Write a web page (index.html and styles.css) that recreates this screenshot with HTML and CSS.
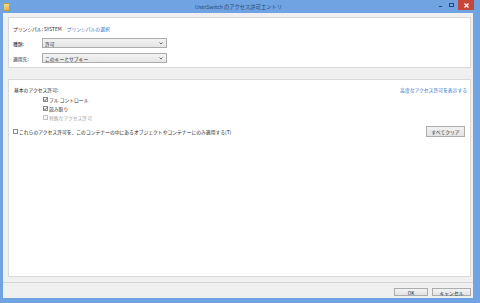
FILE: index.html
```html
<!DOCTYPE html>
<html lang="ja">
<head>
    <meta charset="UTF-8">
    <title>UserSwitch のアクセス許可エントリ</title>
    <link rel="stylesheet" href="styles.css">
</head>
<body>

    <div class="window">
        <!-- Title Bar -->
        <div class="titlebar">
            <div class="app-icon"></div>
            <div class="title">UserSwitch のアクセス許可エントリ</div>
            <div class="controls">
                <span class="ctl-min"></span>
                <span class="ctl-max"></span>
                <span class="ctl-close">
                    <svg width="5" height="5" viewBox="0 0 10 10"><path d="M1 1 L9 9 M9 1 L1 9" stroke="#fff" stroke-width="2.4" fill="none"/></svg>
                </span>
            </div>
        </div>

        <div class="client">
            <div class="content">
                <!-- Principal / Type / Applies to -->
                <div class="panel top-panel">
                    <div class="principal">プリンシパル: SYSTEM <a class="link" href="#">プリンシパルの選択</a></div>
                    <div class="field">
                        <span class="label">種類:</span>
                        <div class="combo">
                            <span>許可</span>
                            <svg width="4" height="3" viewBox="0 0 8 6"><path d="M1 1 L4 4 L7 1" stroke="#444" stroke-width="1.6" fill="none"/></svg>
                        </div>
                    </div>
                    <div class="field">
                        <span class="label">適用先:</span>
                        <div class="combo">
                            <span>このキーとサブキー</span>
                            <svg width="4" height="3" viewBox="0 0 8 6"><path d="M1 1 L4 4 L7 1" stroke="#444" stroke-width="1.6" fill="none"/></svg>
                        </div>
                    </div>
                </div>

                <!-- Basic Permissions -->
                <div class="panel perm-panel">
                    <div class="perm-head">
                        <span>基本のアクセス許可:</span>
                        <a class="link" href="#">高度なアクセス許可を表示する</a>
                    </div>
                    <div class="checklist">
                        <div class="check-row">
                            <span class="box"><svg width="5" height="5" viewBox="0 0 10 10"><path d="M2 5 L4.2 7.4 L8.2 2.6" stroke="#333" stroke-width="1.5" fill="none"/></svg></span>フル コントロール
                        </div>
                        <div class="check-row">
                            <span class="box"><svg width="5" height="5" viewBox="0 0 10 10"><path d="M2 5 L4.2 7.4 L8.2 2.6" stroke="#333" stroke-width="1.5" fill="none"/></svg></span>読み取り
                        </div>
                        <div class="check-row disabled">
                            <span class="box"></span>特殊なアクセス許可
                        </div>
                    </div>
                    <div class="apply-row">
                        <div class="check-row">
                            <span class="box"></span>これらのアクセス許可を、このコンテナーの中にあるオブジェクトやコンテナーにのみ適用する(T)
                        </div>
                        <button class="btn btn-clear">すべてクリア</button>
                    </div>
                </div>
            </div>

            <!-- Dialog Buttons -->
            <div class="footer">
                <button class="btn btn-ok">OK</button>
                <button class="btn btn-cancel">キャンセル</button>
            </div>
        </div>
    </div>

</body>
</html>
```

FILE: styles.css
```css
body {
    margin: 0;
    font-family: "Noto Sans CJK JP", "Noto Sans", sans-serif;
    font-size: 4.8px;
    color: #1a1a1a;
}

.window {
    width: 480px;
    height: 303px;
    background-color: #6fa3e2;
    display: flex;
    flex-direction: column;
    box-sizing: border-box;
    padding-bottom: 5px;
}

/* Title bar */
.titlebar {
    height: 13px;
    display: grid;
    grid-template-columns: 1fr auto 1fr;
    align-items: center;
    padding: 0 6px 0 3px;
}

.app-icon {
    width: 5px;
    height: 6px;
    background: linear-gradient(#f6dc8a, #e2b64c);
    border: 0.5px solid #c79a35;
}

.title {
    font-size: 5.3px;
    color: #2c4a6e;
}

.controls {
    display: flex;
    justify-content: flex-end;
    align-items: flex-start;
    align-self: start;
    height: 13px;
}

.ctl-min {
    width: 3px;
    height: 1px;
    background: #2c4a6e;
    margin: 6px 7px 0 0;
}

.ctl-max {
    width: 3px;
    height: 2px;
    border: 1px solid #2c4a6e;
    border-top-width: 1.5px;
    margin: 3px 4px 0 0;
}

.ctl-close {
    width: 16px;
    height: 10px;
    background-color: #c7463a;
    display: flex;
    align-items: center;
    justify-content: center;
}

/* Client area */
.client {
    flex: 1;
    margin: 0 7px 0 3px;
    background-color: #f0f0f0;
    display: flex;
    flex-direction: column;
}

.content {
    padding: 4px 2px 0 5px;
}

.panel {
    background: white;
    border: 1px solid #d9d9d9;
    box-sizing: border-box;
}

.link {
    color: #2a6fc9;
    text-decoration: none;
}

.top-panel {
    height: 51px;
    padding: 8px 5px 0 4px;
}

.principal {
    height: 6px;
    line-height: 6px;
    margin-bottom: 6px;
}

.principal .link {
    margin-left: 4px;
}

.field {
    display: flex;
    align-items: center;
    height: 10px;
    margin-bottom: 5px;
}

.label {
    width: 29px;
}

.combo {
    width: 125px;
    height: 10px;
    box-sizing: border-box;
    border: 1px solid #acacac;
    background: linear-gradient(#f2f2f2, #e6e6e6);
    display: flex;
    align-items: center;
    justify-content: space-between;
    padding: 0 3px 0 2px;
}

.perm-panel {
    height: 198px;
    margin-top: 11px;
    padding: 7px 3px 0 5px;
}

.perm-head {
    display: flex;
    justify-content: space-between;
    height: 6px;
    line-height: 6px;
    margin-bottom: 3px;
}

.checklist {
    padding-left: 29px;
    display: flex;
    flex-direction: column;
    gap: 3px;
}

.check-row {
    display: flex;
    align-items: center;
    height: 6px;
    gap: 1px;
}

.check-row.disabled {
    color: #a0a0a0;
}

.box {
    position: relative;
    width: 5px;
    height: 5px;
    box-sizing: border-box;
    border: 0.6px solid #8a8a8a;
    background: white;
}

.box svg {
    position: absolute;
    left: -0.6px;
    top: -0.6px;
}

.check-row.disabled .box {
    border-color: #c4c4c4;
    background: #f4f4f4;
}

.apply-row {
    display: flex;
    justify-content: space-between;
    align-items: center;
    height: 11px;
    margin-top: 6px;
    margin-left: -1px;
}

.btn {
    font-family: inherit;
    font-size: 4.8px;
    color: #1a1a1a;
    border: 1px solid #acacac;
    background: linear-gradient(#f2f2f2, #e3e3e3);
    padding: 0;
    box-sizing: border-box;
}

.btn-clear {
    width: 39px;
    height: 11px;
    margin-right: 2px;
}

/* Footer */
.footer {
    margin-top: 5px;
    border-top: 1px solid #d4d4d4;
    padding: 5px 2px 2px 0;
    display: flex;
    justify-content: flex-end;
    gap: 4px;
}

.btn-ok {
    width: 34px;
    height: 8px;
}

.btn-cancel {
    width: 39px;
    height: 8px;
}
```
